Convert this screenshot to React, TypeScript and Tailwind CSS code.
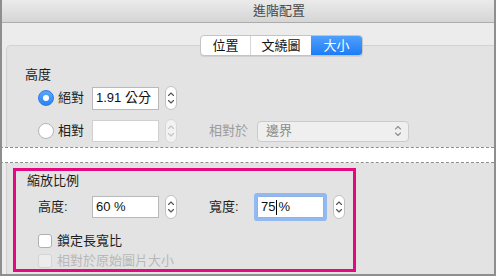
import React from "react";

const font = { fontFamily: '"Liberation Sans", "Noto Sans CJK TC", sans-serif' };

const Stepper = ({ disabled = false }: { disabled?: boolean }) => (
  <div
    className={`w-[12px] h-[24px] rounded-[6px] border flex items-center justify-center ${
      disabled ? "border-[#d8d8d8] bg-[#f2f2f2]" : "border-[#c2c2c2] bg-white"
    }`}
  >
    <svg width="8" height="16" viewBox="0 0 8 16" fill="none">
      <path
        d="M1.5 5.5 L4 3 L6.5 5.5 M1.5 10.5 L4 13 L6.5 10.5"
        stroke={disabled ? "#c4c4c4" : "#555"}
        strokeWidth="1.1"
        strokeLinecap="round"
        strokeLinejoin="round"
      />
    </svg>
  </div>
);

const Radio = ({ on, label }: { on: boolean; label: string }) => (
  <div className="flex items-center gap-[4px] w-[54px]">
    {on ? (
      <div className="w-[16px] h-[16px] rounded-full bg-gradient-to-b from-[#58a6fb] to-[#2c82f5] border border-[#2a7be8] flex items-center justify-center">
        <div className="w-[6px] h-[6px] rounded-full bg-white" />
      </div>
    ) : (
      <div className="w-[16px] h-[16px] rounded-full bg-white border border-[#b5b5b5]" />
    )}
    <span className="text-[13px] leading-[16px] text-[#1d1d1d]">{label}</span>
  </div>
);

const Checkbox = ({ label, disabled = false }: { label: string; disabled?: boolean }) => (
  <div className="flex items-center gap-[5px]">
    <div
      className={`w-[14px] h-[14px] rounded-[3px] border ${
        disabled ? "border-[#d4d4d4] bg-[#ececec]" : "border-[#b0b0b0] bg-white"
      }`}
    />
    <span className={`text-[13px] leading-[16px] ${disabled ? "text-[#b8b8b8]" : "text-[#1d1d1d]"}`}>
      {label}
    </span>
  </div>
);

export default function App() {
  return (
    <div
      style={font}
      className="w-[496px] h-[276px] overflow-hidden flex flex-col border-l-2 border-r-2 border-b-2 border-[#8e8e8e] bg-[#ececec]"
    >
      {/* title bar */}
      <div className="h-[23px] shrink-0 flex items-center justify-center pl-[62px] bg-gradient-to-b from-[#ebebeb] to-[#d5d5d5] border-b border-[#acacac]">
        <span className="text-[13px] text-[#4a4a4a]">進階配置</span>
      </div>

      {/* upper part */}
      <div className="h-[124px] shrink-0 flex flex-col pt-[12px]">
        <div className="flex pl-[198px] relative z-10">
          <div className="flex h-[21px] rounded-[4px] border border-[#c4c4c4] bg-white text-[13px] overflow-hidden shadow-[0_1px_0_#d0d0d0]">
            <div className="w-[50px] flex items-center justify-center border-r border-[#d6d6d6] text-[#111]">位置</div>
            <div className="w-[60px] flex items-center justify-center text-[#111]">文繞圖</div>
            <div className="w-[51px] flex items-center justify-center bg-gradient-to-b from-[#4fa0fc] to-[#1b7cf6] text-white">大小</div>
          </div>
        </div>
        <div className="-mt-[11px] ml-[4px] flex-1 bg-[#e3e3e3] border-l border-t border-[#d2d2d2] rounded-tl-[5px] pl-[18px] pt-[21px]">
          <div className="text-[13px] leading-[16px] text-[#1d1d1d]">高度</div>
          <div className="flex items-center h-[24px] mt-[3px] pl-[13px]">
            <Radio on label="絕對" />
            <div className="w-[67px] h-[23px] ml-[0px] bg-white border border-[#b9b9b9] text-[13px] text-[#111] flex items-center pl-[3px]">
              1.91 公分
            </div>
            <div className="ml-[6px]">
              <Stepper />
            </div>
          </div>
          <div className="flex items-center h-[24px] mt-[9px] pl-[13px]">
            <Radio on={false} label="相對" />
            <div className="w-[67px] h-[22px] bg-white border border-[#d0d0d0]" />
            <div className="ml-[6px]">
              <Stepper disabled />
            </div>
            <span className="ml-[32px] text-[13px] text-[#9c9c9c]">相對於</span>
            <div className="ml-[9px] w-[152px] h-[21px] rounded-[4px] border border-[#cbcbcb] bg-[#efefef] flex items-center justify-between pl-[8px] pr-[6px]">
              <span className="text-[13px] text-[#8a8a8a]">邊界</span>
              <svg width="8" height="14" viewBox="0 0 8 14" fill="none">
                <path
                  d="M1.5 5 L4 2.5 L6.5 5 M1.5 9 L4 11.5 L6.5 9"
                  stroke="#8f8f8f"
                  strokeWidth="1.1"
                  strokeLinecap="round"
                  strokeLinejoin="round"
                />
              </svg>
            </div>
          </div>
        </div>
      </div>

      {/* torn strip */}
      <div className="h-[16px] shrink-0 bg-white border-y border-dashed border-[#8c8c8c] -ml-[2px]" />

      {/* lower part */}
      <div className="flex-1 flex">
        <div className="ml-[4px] flex-1 bg-[#e3e3e3] border-l border-[#d2d2d2] pl-[6px] pt-[5px]">
          <div className="w-[343px] h-[104px] border-[3px] border-[#e5097f] pl-[11px] pt-[2px]">
            <div className="text-[13px] leading-[16px] text-[#1d1d1d]">縮放比例</div>
            <div className="flex items-center h-[24px] mt-[6px] pl-[11px]">
              <span className="w-[54px] text-[13px] text-[#1d1d1d]">高度:</span>
              <div className="w-[67px] h-[22px] bg-white border border-[#b9b9b9] text-[13px] text-[#111] flex items-center pl-[3px]">
                60 %
              </div>
              <div className="ml-[6px]">
                <Stepper />
              </div>
              <span className="ml-[32px] w-[48px] text-[13px] text-[#1d1d1d]">寬度:</span>
              <div className="w-[67px] h-[22px] bg-white border border-[#8fb3e8] shadow-[0_0_0_3px_#92baf0] rounded-[1px] text-[13px] text-[#111] flex items-center pl-[3px]">
                75<span className="inline-block w-[1px] h-[15px] bg-black mx-[1px]" />%
              </div>
              <div className="ml-[9px]">
                <Stepper />
              </div>
            </div>
            <div className="mt-[14px] pl-[11px]">
              <Checkbox label="鎖定長寬比" />
            </div>
            <div className="mt-[4px] pl-[11px]">
              <Checkbox label="相對於原始圖片大小" disabled />
            </div>
          </div>
        </div>
      </div>
    </div>
  );
}
